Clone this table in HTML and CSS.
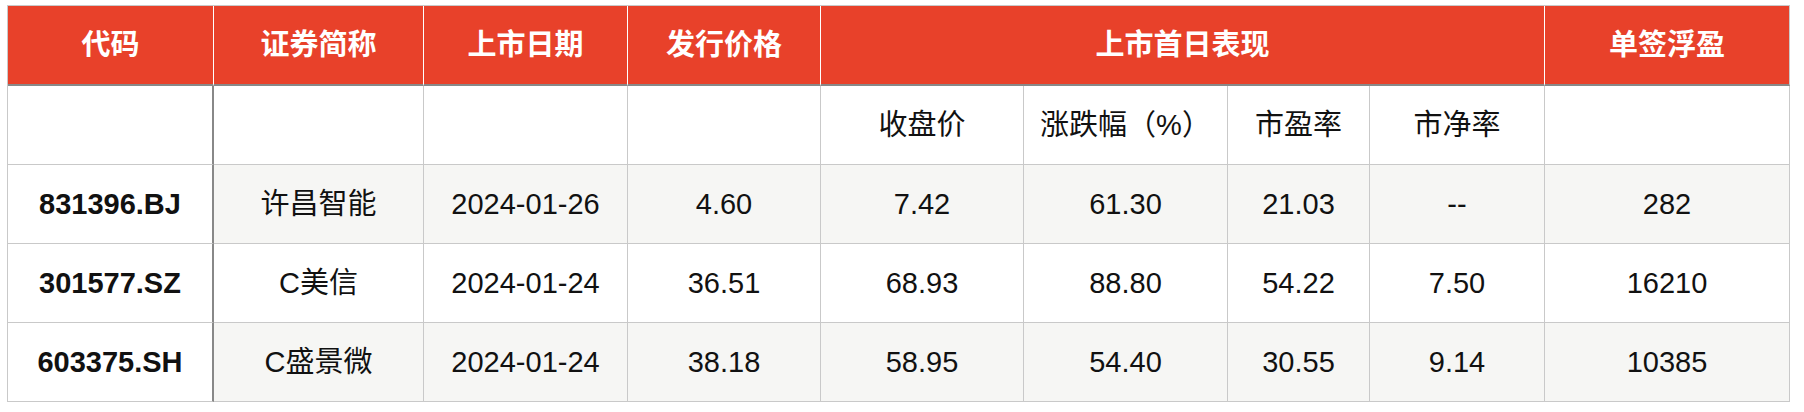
FILE: index.html
```html
<!DOCTYPE html>
<html lang="zh-CN">
<head>
<meta charset="utf-8">
<title>新股上市首日表现</title>
<link rel="stylesheet" href="styles.css">
</head>
<body>
<div class="wrap">
<table class="ipo">
  <colgroup>
    <col class="c1"><col class="c2"><col class="c3"><col class="c4"><col class="c5"><col class="c6"><col class="c7"><col class="c8"><col class="c9">
  </colgroup>
  <thead>
    <tr class="head">
      <th>代码</th>
      <th>证券简称</th>
      <th>上市日期</th>
      <th>发行价格</th>
      <th colspan="4">上市首日表现</th>
      <th class="last">单签浮盈</th>
    </tr>
    <tr class="sub">
      <td class="code"></td>
      <td></td>
      <td></td>
      <td></td>
      <td>收盘价</td>
      <td>涨跌幅（%）</td>
      <td>市盈率</td>
      <td>市净率</td>
      <td></td>
    </tr>
  </thead>
  <tbody>
    <tr class="alt">
      <td class="code">831396.BJ</td>
      <td>许昌智能</td>
      <td>2024-01-26</td>
      <td>4.60</td>
      <td>7.42</td>
      <td>61.30</td>
      <td>21.03</td>
      <td>--</td>
      <td>282</td>
    </tr>
    <tr>
      <td class="code">301577.SZ</td>
      <td>C美信</td>
      <td>2024-01-24</td>
      <td>36.51</td>
      <td>68.93</td>
      <td>88.80</td>
      <td>54.22</td>
      <td>7.50</td>
      <td>16210</td>
    </tr>
    <tr class="alt">
      <td class="code">603375.SH</td>
      <td>C盛景微</td>
      <td>2024-01-24</td>
      <td>38.18</td>
      <td>58.95</td>
      <td>54.40</td>
      <td>30.55</td>
      <td>9.14</td>
      <td>10385</td>
    </tr>
  </tbody>
</table>
</div>
</body>
</html>
```
FILE: styles.css
```css
html, body {
  margin: 0;
  padding: 0;
  background: #ffffff;
}

.wrap {
  padding: 5px 0 0 7px;
}

.ipo {
  border-collapse: separate;
  border-spacing: 0;
  table-layout: fixed;
  width: 1783px;
  border-top: 1px solid #c9c9c9;
  border-left: 1px solid #c9c9c9;
  font-family: "Liberation Sans", "Noto Sans CJK SC", sans-serif;
  font-size: 29px;
  line-height: 34px;
  color: #111111;
}

.c1 { width: 206px; }
.c2 { width: 210px; }
.c3 { width: 204px; }
.c4 { width: 193px; }
.c5 { width: 203px; }
.c6 { width: 204px; }
.c7 { width: 142px; }
.c8 { width: 175px; }
.c9 { width: 245px; }

.ipo th,
.ipo td {
  padding: 0;
  text-align: center;
  vertical-align: middle;
  white-space: nowrap;
  border-right: 1px solid #c9c9c9;
  border-bottom: 1px solid #c9c9c9;
}

.head th {
  height: 78px;
  background: #e8412a;
  color: #ffffff;
  font-weight: 700;
  border-right: 1px solid #ffffff;
  border-bottom: 2px solid #888888;
}

.head th.last {
  border-right: 1px solid #c9c9c9;
}

.sub td {
  height: 78px;
  background: #ffffff;
}

tbody td {
  height: 78px;
  background: #ffffff;
}

tbody tr.alt td {
  background: #f6f6f4;
}

.ipo td.code {
  border-right: 2px solid #888888;
  background: #ffffff;
}

tbody td.code {
  font-weight: 700;
}
```
